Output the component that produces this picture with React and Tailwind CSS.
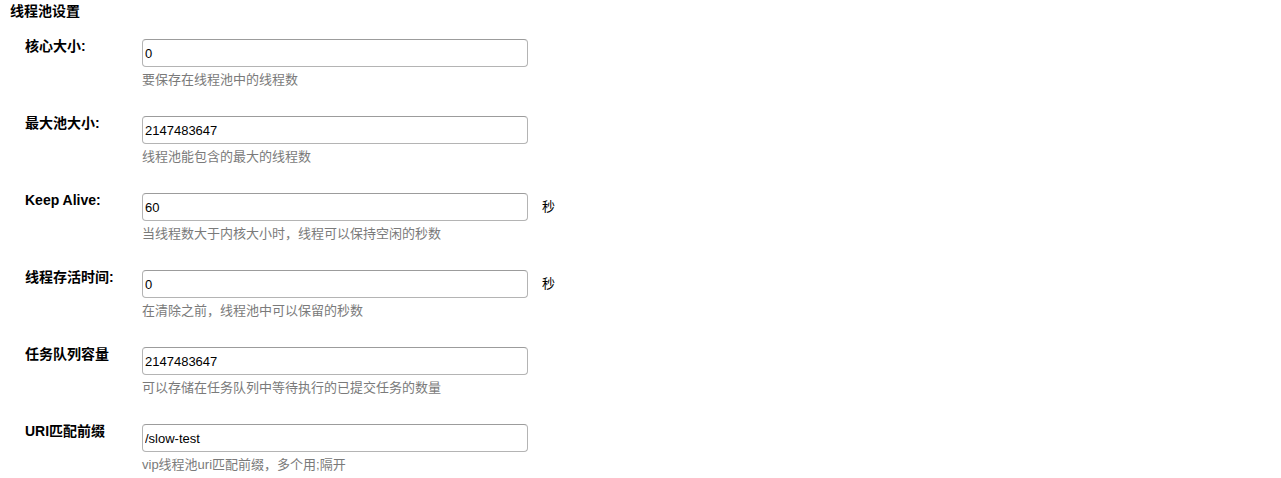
import React from "react";

const rows = [
  { label: "核心大小:", value: "0", help: "要保存在线程池中的线程数" },
  { label: "最大池大小:", value: "2147483647", help: "线程池能包含的最大的线程数" },
  { label: "Keep Alive:", value: "60", help: "当线程数大于内核大小时，线程可以保持空闲的秒数", unit: "秒" },
  { label: "线程存活时间:", value: "0", help: "在清除之前，线程池中可以保留的秒数", unit: "秒" },
  { label: "任务队列容量", value: "2147483647", help: "可以存储在任务队列中等待执行的已提交任务的数量" },
  { label: "URI匹配前缀", value: "/slow-test", help: "vip线程池uri匹配前缀，多个用;隔开" },
];

export default function App() {
  return (
    <div
      className="w-[1281px] h-[478px] bg-white text-black overflow-hidden"
      style={{ fontFamily: '"Liberation Sans", Arial, "Noto Sans CJK SC", sans-serif' }}
    >
      <div className="pl-[10px] pt-[3px]">
        <div className="text-[14px] leading-[17px] font-bold">线程池设置</div>
        <div className="mt-[19px] flex flex-col">
          {rows.map((r, i) => (
            <div key={i} className="flex h-[77px]">
              <div className="w-[132px] pl-[15px] text-[14px] leading-[15px] font-bold">{r.label}</div>
              <div className="flex flex-col">
                <div className="flex items-center">
                  <input
                    readOnly
                    value={r.value}
                    className="w-[386px] h-[28px] border border-[#b4b4b4] border-t-[#9c9c9c] rounded-[4px] pl-[2px] text-[13px] text-black outline-none bg-white"
                    style={{ fontFamily: '"Liberation Sans", Arial, sans-serif' }}
                  />
                  {r.unit && <span className="ml-[14px] text-[13px]">{r.unit}</span>}
                </div>
                <div className="mt-[5px] text-[13px] leading-[16px] text-[#7a7a7a]">{r.help}</div>
              </div>
            </div>
          ))}
        </div>
      </div>
    </div>
  );
}
